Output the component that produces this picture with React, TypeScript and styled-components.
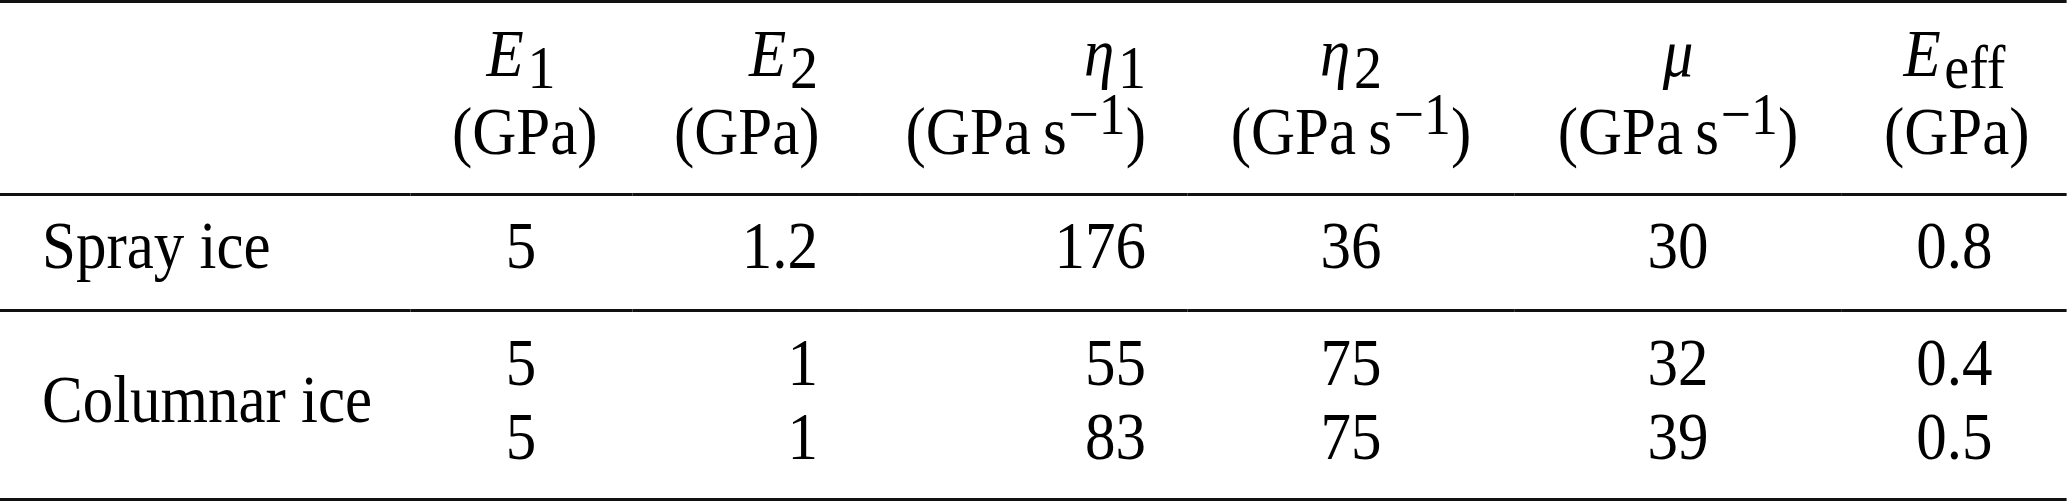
import React from 'react';
import styled, {createGlobalStyle} from 'styled-components';

const GlobalStyle = createGlobalStyle`
  html, body {
    margin: 0;
    padding: 0;
    background: #fff;
    overflow: hidden;
  }
  body {
    font-family: "Liberation Serif", "Times New Roman", serif;
    color: #000;
  }
`;

// the source glyphs are a bit narrow for their height, so the table is laid out
// wider and squeezed back horizontally
const SQUEEZE = 0.91;
const columns = [410, 222, 228, 328, 326, 328, 225].map(w => w / SQUEEZE);
const SIDE = 42 / SQUEEZE;

const Table = styled.table`
  width: ${2067 / SQUEEZE}px;
  table-layout: fixed;
  border-collapse: separate;
  border-spacing: 0;
  border-top: 3px solid #111;
  border-bottom: 3px solid #111;
  font-family: "Liberation Serif", "Times New Roman", serif;
  font-size: 67px;
  transform: scaleX(${SQUEEZE});
  transform-origin: 0 0;
`;

const HeadCell = styled.th`
  font-weight: normal;
  line-height: 78px;
  padding: 11px ${SIDE}px 23px;
  border-bottom: 3px solid #111;
  text-align: ${p => p.$align || 'center'};
  vertical-align: top;
  white-space: nowrap;
`;

const Cell = styled.td`
  line-height: 74px;
  padding: ${p => p.$pad};
  padding-left: ${SIDE}px;
  padding-right: ${SIDE}px;
  text-align: ${p => p.$align || 'center'};
  vertical-align: middle;
  white-space: nowrap;
  border-bottom: ${p => (p.$rule ? '3px solid #111' : 'none')};
`;

const Line = styled.span`
  display: block;
`;

const Var = styled.i`
  font-style: italic;
`;

const Sub = styled.span`
  display: inline-block;
  font-size: 0.92em;
  line-height: 0;
  vertical-align: -12px;
  margin-left: 4px;
`;

const Sup = styled.span`
  display: inline-block;
  font-size: 0.88em;
  line-height: 0;
  vertical-align: 20px;
  margin-left: 2px;
`;

const Thin = styled.span`
  margin-left: 0.2em;
`;

const Unit = ({perSecond}) =>
    <Line>
        (GPa{perSecond && <><Thin/>s<Sup>−1</Sup></>})
    </Line>;

const headers = [
    {sym: <><Var>E</Var><Sub>1</Sub></>, per: false, align: 'center'},
    {sym: <><Var>E</Var><Sub>2</Sub></>, per: false, align: 'right'},
    {sym: <><Var>η</Var><Sub>1</Sub></>, per: true, align: 'right'},
    {sym: <><Var>η</Var><Sub>2</Sub></>, per: true, align: 'center'},
    {sym: <Var>μ</Var>, per: true, align: 'center'},
    {sym: <><Var>E</Var><Sub>eff</Sub></>, per: false, align: 'center'},
];

const groups = [
    {name: 'Spray ice', rows: [['5', '1.2', '176', '36', '30', '0.8']], pad: '12px 0 27px', rule: true},
    {
        name: 'Columnar ice',
        rows: [['5', '1', '55', '75', '32', '0.4'], ['5', '1', '83', '75', '39', '0.5']],
        pad: '13px 0 25px',
        rule: false
    },
];

const App = () => {
    return <>
        <GlobalStyle/>
        <Table>
            <colgroup>
                {columns.map((w, k) => <col key={k} style={{width: w}}/>)}
            </colgroup>
            <thead>
            <tr>
                <HeadCell $align="left"/>
                {headers.map((h, k) =>
                    <HeadCell key={k} $align={h.align}>
                        <Line>{h.sym}</Line>
                        <Unit perSecond={h.per}/>
                    </HeadCell>
                )}
            </tr>
            </thead>
            <tbody>
            {groups.map(g =>
                <tr key={g.name}>
                    <Cell $align="left" $pad={g.pad} $rule={g.rule}>{g.name}</Cell>
                    {headers.map((h, c) =>
                        <Cell key={c} $align={h.align} $pad={g.pad} $rule={g.rule}>
                            {g.rows.map((r, i) => <Line key={i}>{r[c]}</Line>)}
                        </Cell>
                    )}
                </tr>
            )}
            </tbody>
        </Table>
    </>;
};

export default App;
